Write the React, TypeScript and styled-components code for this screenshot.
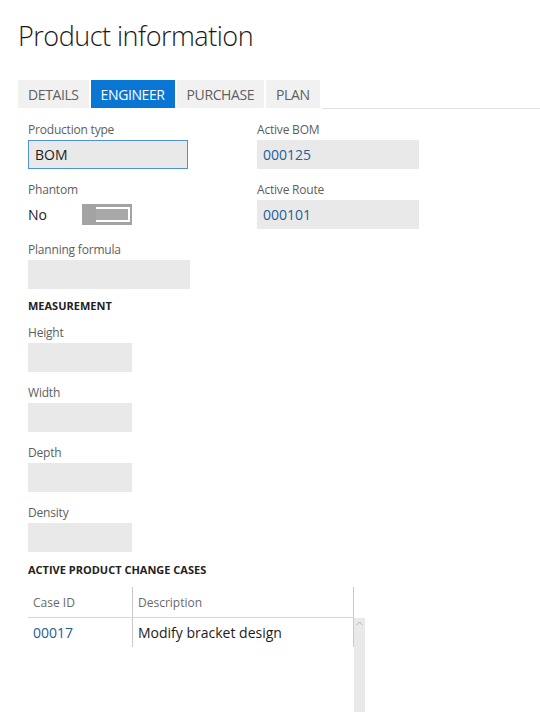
import styled, { createGlobalStyle } from 'styled-components';

const GlobalStyle = createGlobalStyle`
  html, body {
    margin: 0;
    padding: 0;
    overflow: hidden;
    background: #ffffff;
  }
  body {
    font-family: 'Open Sans', 'Noto Sans', sans-serif;
    color: #222222;
  }
`;

const Page = styled.div`
  width: 540px;
  height: 712px;
  padding-left: 18px;
  box-sizing: border-box;
`;

const Title = styled.h1`
  margin: 0;
  padding-top: 18px;
  height: 80px;
  box-sizing: border-box;
  font-size: 27px;
  line-height: 36px;
  font-weight: 300;
  letter-spacing: -0.5px;
  color: #1a1a1a;
`;

const TabBar = styled.div`
  display: flex;
  gap: 2px;
  height: 29px;
`;

const Tab = styled.div<{ $active?: boolean }>`
  display: flex;
  align-items: center;
  height: 28px;
  padding: 0 10px;
  font-size: 14px;
  letter-spacing: -0.4px;
  text-transform: uppercase;
  background: ${(p) => (p.$active ? '#0a76d3' : '#f1f1f1')};
  color: ${(p) => (p.$active ? '#ffffff' : '#606060')};
`;

const TabLine = styled.div`
  flex: 1;
  height: 28px;
  border-bottom: 1px solid #e3e3e3;
`;

const Form = styled.div`
  padding: 11px 0 0 10px;
`;

const Columns = styled.div`
  display: grid;
  grid-template-columns: 229px 1fr;
`;

const Group = styled.div`
  display: flex;
  flex-direction: column;
  margin-bottom: 11px;
`;

const Label = styled.div`
  height: 20px;
  line-height: 20px;
  font-size: 12px;
  letter-spacing: -0.2px;
  color: #5e5e5e;
`;

const Field = styled.div<{ $width: number; $focus?: boolean; $link?: boolean }>`
  display: flex;
  align-items: center;
  box-sizing: border-box;
  width: ${(p) => p.$width}px;
  height: 29px;
  padding-left: 6px;
  background: #e9e9e9;
  border: ${(p) => (p.$focus ? '1px solid #4f92d6' : 'none')};
  font-size: 14px;
  color: ${(p) => (p.$link ? '#245e9a' : '#1c1c1c')};
`;

const ToggleRow = styled.div`
  display: flex;
  align-items: center;
  height: 29px;
  font-size: 14px;
  color: #1c1c1c;
`;

const ToggleText = styled.span`
  width: 54px;
`;

const Toggle = styled.div`
  display: flex;
  align-items: center;
  justify-content: flex-end;
  box-sizing: border-box;
  width: 50px;
  height: 21px;
  padding-right: 2px;
  background: #a3a3a3;
`;

const ToggleInner = styled.div`
  width: 34px;
  height: 15px;
  box-sizing: border-box;
  border: 2px solid #ffffff;
  border-left: none;
  background: #a8a8a8;
`;

const SectionTitle = styled.div<{ $top: number }>`
  margin-top: ${(p) => p.$top}px;
  height: 20px;
  line-height: 20px;
  font-size: 11px;
  font-weight: 700;
  text-transform: uppercase;
  color: #222222;
  margin-bottom: 7px;
`;

const TableArea = styled.div`
  display: flex;
  align-items: flex-start;
  margin-top: 4px;
`;

const Table = styled.div`
  width: 325px;
  border-right: 1px solid #c9c9c9;
`;

const Row = styled.div<{ $header?: boolean }>`
  display: grid;
  grid-template-columns: 105px 1fr;
  height: ${(p) => (p.$header ? 30 : 29)}px;
  border-bottom: ${(p) => (p.$header ? '1px solid #d6d6d6' : 'none')};
`;

const Cell = styled.div<{ $header?: boolean; $link?: boolean; $first?: boolean }>`
  display: flex;
  align-items: center;
  padding-left: 5px;
  border-right: ${(p) => (p.$first ? '1px solid #c9c9c9' : 'none')};
  font-size: ${(p) => (p.$header ? 12 : 14)}px;
  color: ${(p) => (p.$header ? '#6a6a6a' : p.$link ? '#245e9a' : '#1c1c1c')};
`;

const Scrollbar = styled.div`
  width: 11px;
  height: 100px;
  margin-top: 31px;
  background: #e9e9e9;
  display: flex;
  justify-content: center;
  padding-top: 3px;
  box-sizing: border-box;
`;

const fields = ['Height', 'Width', 'Depth', 'Density'];

export default function App() {
  return (
    <Page>
      <GlobalStyle />
      <Title>Product information</Title>
      <TabBar>
        <Tab>Details</Tab>
        <Tab $active>Engineer</Tab>
        <Tab>Purchase</Tab>
        <Tab>Plan</Tab>
        <TabLine />
      </TabBar>
      <Form>
        <Columns>
          <div>
            <Group>
              <Label>Production type</Label>
              <Field $width={160} $focus>BOM</Field>
            </Group>
            <Group>
              <Label>Phantom</Label>
              <ToggleRow>
                <ToggleText>No</ToggleText>
                <Toggle>
                  <ToggleInner />
                </Toggle>
              </ToggleRow>
            </Group>
            <Group>
              <Label>Planning formula</Label>
              <Field $width={162} />
            </Group>
          </div>
          <div>
            <Group>
              <Label>Active BOM</Label>
              <Field $width={162} $link>000125</Field>
            </Group>
            <Group>
              <Label>Active Route</Label>
              <Field $width={162} $link>000101</Field>
            </Group>
          </div>
        </Columns>
        <SectionTitle $top={-4}>Measurement</SectionTitle>
        {fields.map((label) => (
          <Group key={label}>
            <Label>{label}</Label>
            <Field $width={104} />
          </Group>
        ))}
        <SectionTitle $top={-3}>Active product change cases</SectionTitle>
        <TableArea>
          <Table>
            <Row $header>
              <Cell $header $first>Case ID</Cell>
              <Cell $header>Description</Cell>
            </Row>
            <Row>
              <Cell $first $link>00017</Cell>
              <Cell>Modify bracket design</Cell>
            </Row>
          </Table>
          <Scrollbar>
            <svg width="7" height="5" viewBox="0 0 7 5">
              <path d="M0.5 4 L3.5 1 L6.5 4" fill="none" stroke="#b5b5b5" strokeWidth="1" />
            </svg>
          </Scrollbar>
        </TableArea>
      </Form>
    </Page>
  );
}
